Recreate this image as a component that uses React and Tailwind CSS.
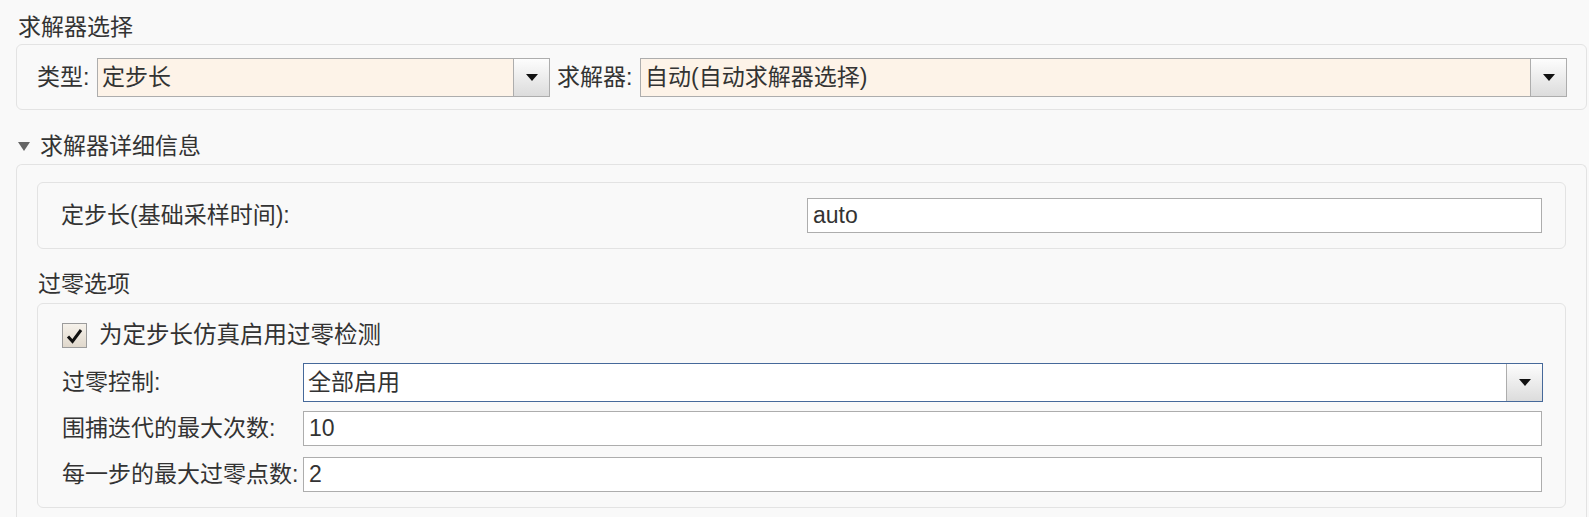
import React from 'react';

const font = { fontFamily: '"Liberation Sans", "Noto Sans CJK SC", sans-serif' };

function Arrow() {
  return (
    <svg width="12" height="7" viewBox="0 0 12 7">
      <polygon points="0,0 12,0 6,7" fill="#111" />
    </svg>
  );
}

function DropButton() {
  return (
    <div className="w-[36px] h-full flex items-center justify-center border-l border-[#adadad] bg-gradient-to-b from-[#fdfdfd] to-[#dcdcdc]">
      <Arrow />
    </div>
  );
}

function Select({ value, className = '', bg = 'bg-[#fdf3e8]', border = 'border-[#adadad]' }) {
  return (
    <div className={`h-[39px] flex border ${border} ${bg} ${className}`}>
      <div className="flex-1 flex items-center pl-[4px] text-[23px] leading-[23px] text-[#333]">{value}</div>
      <DropButton />
    </div>
  );
}

function TextInput({ value, className = '' }) {
  return (
    <div className={`h-[35px] flex items-center pl-[5px] border border-[#adadad] bg-white text-[23px] leading-[23px] text-[#333] ${className}`}>
      {value}
    </div>
  );
}

export default function App() {
  return (
    <div className="w-full h-[517px] overflow-hidden bg-[#f9f9f9] text-[#333]" style={font}>
      {/* 求解器选择 */}
      <div className="h-[44px] pl-[18px] pt-[16px] text-[23px] leading-[23px]">求解器选择</div>
      <div className="ml-[16px] mr-[2px] h-[66px] border border-[#e3e3e3] rounded-[6px] flex items-center pl-[20px] pr-[19px]">
        <span className="text-[23px] leading-[23px] w-[60px]">类型:</span>
        <Select value="定步长" className="w-[453px]" />
        <span className="text-[23px] leading-[23px] ml-[7px] w-[83px]">求解器:</span>
        <Select value="自动(自动求解器选择)" className="flex-1" />
      </div>

      {/* 求解器详细信息 */}
      <div className="h-[54px] pt-[25px] pl-[18px] flex items-start">
        <div className="h-[23px] flex items-center">
          <svg width="12" height="9" viewBox="0 0 12 9">
            <polygon points="0,0 12,0 6,9" fill="#666" />
          </svg>
        </div>
        <span className="ml-[10px] text-[23px] leading-[23px]">求解器详细信息</span>
      </div>
      <div className="ml-[16px] mr-[2px] border-t border-l border-r border-[#e3e3e3] rounded-t-[6px] px-[20px] pt-[17px] h-[400px]">
        <div className="h-[67px] border border-[#e3e3e3] rounded-[6px] flex items-center pl-[23px] pr-[23px]">
          <span className="flex-1 text-[23px] leading-[23px]">定步长(基础采样时间):</span>
          <TextInput value="auto" className="w-[735px]" />
        </div>

        <div className="h-[54px] pt-[24px] pl-[1px] text-[23px] leading-[23px]">过零选项</div>

        <div className="h-[205px] border border-[#e3e3e3] rounded-[6px] pl-[24px] pr-[22px] pt-[19px]">
          <div className="flex items-center h-[25px]">
            <div className="w-[25px] h-[25px] border border-[#9c9c9c] bg-gradient-to-b from-[#f6f2eb] to-[#e0d8cc] flex items-center justify-center">
              <svg width="17" height="16" viewBox="0 0 17 16">
                <path d="M2 8.5 L6.5 13.5 L15 2" fill="none" stroke="#111" strokeWidth="3" strokeLinejoin="miter" />
              </svg>
            </div>
            <span className="ml-[12px] text-[23.5px] leading-[23px]">为定步长仿真启用过零检测</span>
          </div>

          <div className="grid grid-cols-[241px_1fr] items-center mt-[15px]">
            <span className="text-[23px] leading-[23px]">过零控制:</span>
            <Select value="全部启用" bg="bg-white" border="border-[#46699a]" />
          </div>
          <div className="grid grid-cols-[241px_1fr] items-center mt-[9px]">
            <span className="text-[23px] leading-[23px]">围捕迭代的最大次数:</span>
            <TextInput value="10" className="mr-[1px]" />
          </div>
          <div className="grid grid-cols-[241px_1fr] items-center mt-[11px]">
            <span className="text-[23px] leading-[23px]">每一步的最大过零点数:</span>
            <TextInput value="2" className="mr-[1px]" />
          </div>
        </div>
      </div>
    </div>
  );
}
